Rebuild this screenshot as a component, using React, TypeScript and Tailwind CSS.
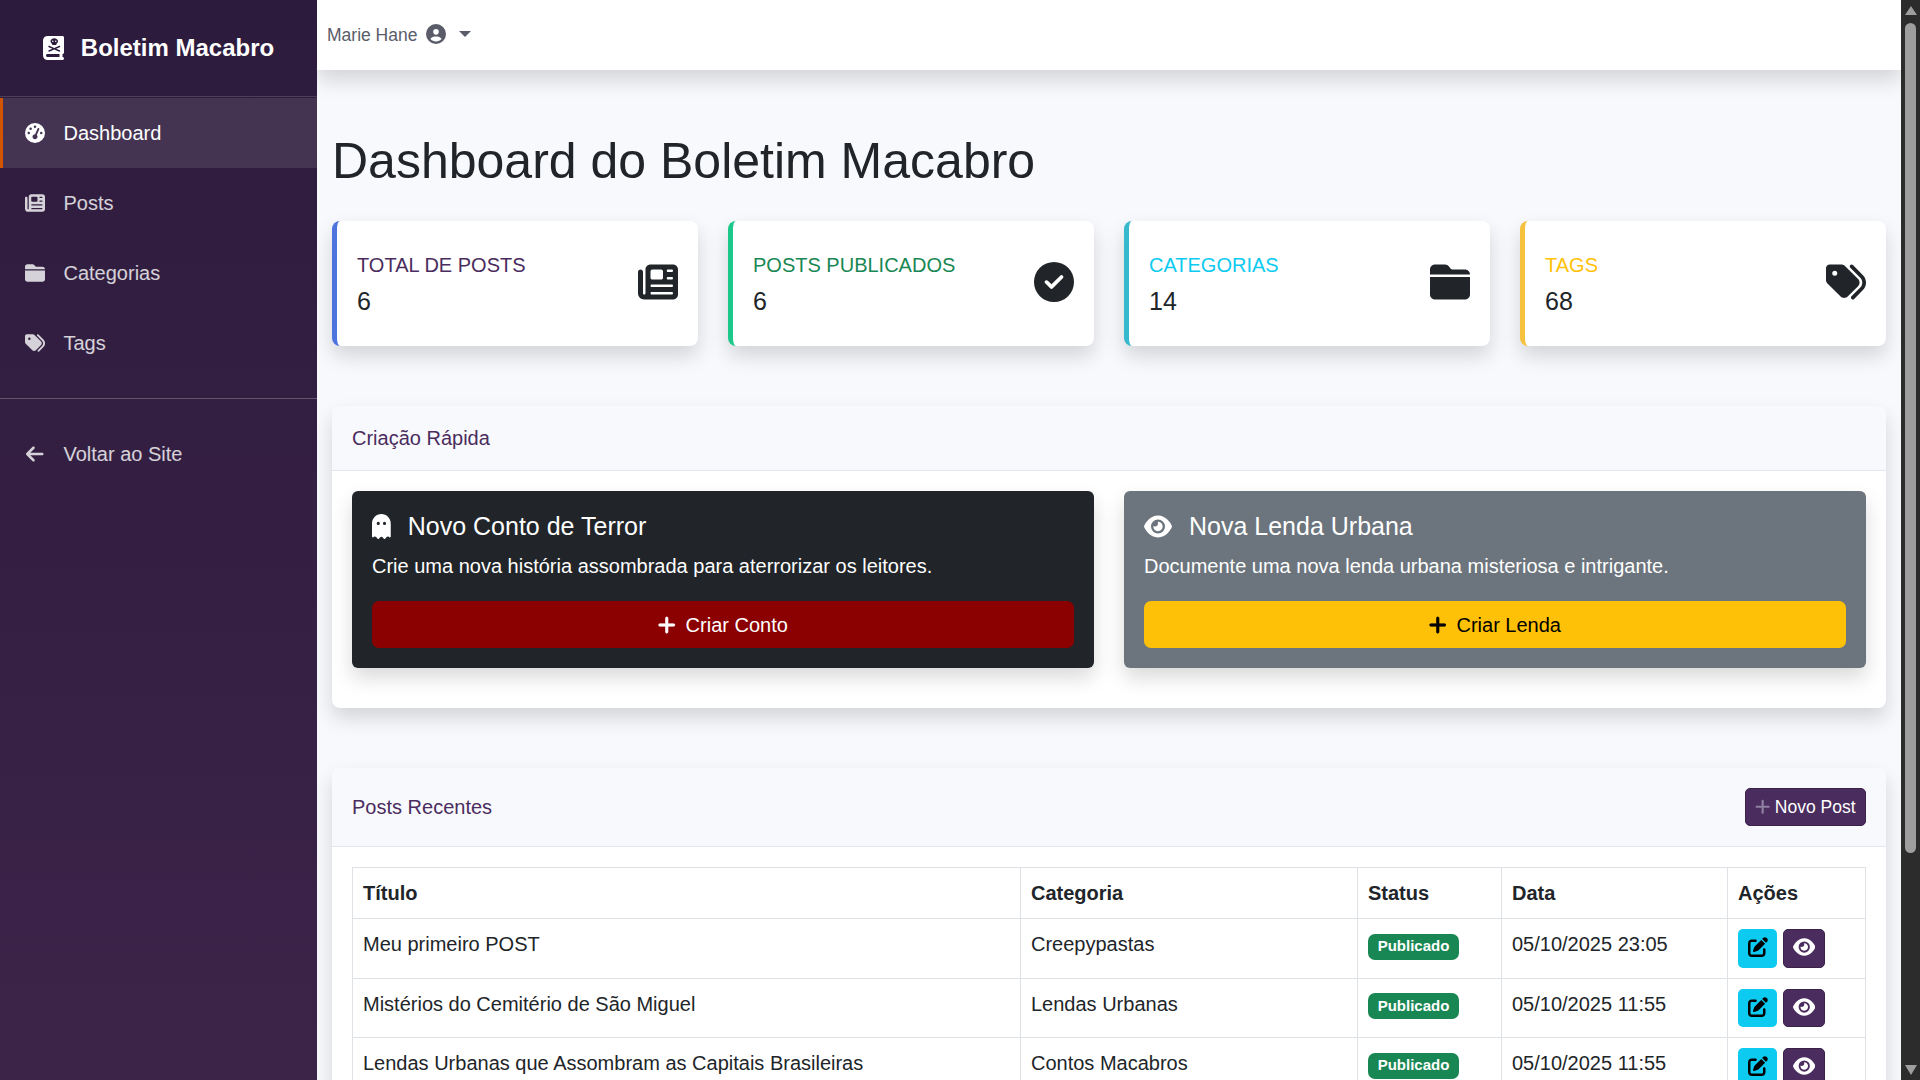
import {
  FaArrowLeft,
  FaBookSkull,
  FaCircleCheck,
  FaCircleUser,
  FaEye,
  FaFolderClosed,
  FaGaugeHigh,
  FaGhost,
  FaNewspaper,
  FaPenToSquare,
  FaPlus,
  FaTags,
} from 'react-icons/fa6';
import type { IconType } from 'react-icons';

const navItems: { label: string; icon: IconType; active?: boolean }[] = [
  { label: 'Dashboard', icon: FaGaugeHigh, active: true },
  { label: 'Posts', icon: FaNewspaper },
  { label: 'Categorias', icon: FaFolderClosed },
  { label: 'Tags', icon: FaTags },
];

const stats = [
  { label: 'Total de Posts', value: '6', icon: FaNewspaper, border: 'border-l-[#4e73df]', text: 'text-[#4a2c5e]' },
  { label: 'Posts Publicados', value: '6', icon: FaCircleCheck, border: 'border-l-[#1cc88a]', text: 'text-[#198754]' },
  { label: 'Categorias', value: '14', icon: FaFolderClosed, border: 'border-l-[#36b9cc]', text: 'text-[#0dcaf0]' },
  { label: 'Tags', value: '68', icon: FaTags, border: 'border-l-[#f6c23e]', text: 'text-[#ffc107]' },
];

const posts = [
  { title: 'Meu primeiro POST', category: 'Creepypastas', date: '05/10/2025 23:05' },
  { title: 'Mistérios do Cemitério de São Miguel', category: 'Lendas Urbanas', date: '05/10/2025 11:55' },
  { title: 'Lendas Urbanas que Assombram as Capitais Brasileiras', category: 'Contos Macabros', date: '05/10/2025 11:55' },
];

function Sidebar() {
  return (
    <aside className="w-[317px] h-full shrink-0 bg-gradient-to-b from-[#2d1b3d] to-[#3c2449]">
      <div className="h-[97px] flex items-center justify-center gap-[17px] border-b border-white/15">
        <FaBookSkull className="w-[21px] h-[24px] text-white" />
        <span className="text-[24px] font-bold text-white">Boletim Macabro</span>
      </div>
      <nav className="pt-px">
        {navItems.map(item => (
          <a
            key={item.label}
            className={`h-[70px] flex items-center gap-[16px] pl-[19.5px] border-l-[3px] text-[20px] ${
              item.active ? 'border-l-[#d35400] bg-white/10 text-white' : 'border-l-transparent text-white/80'
            }`}
          >
            <span className="w-[25px] flex justify-center">
              <item.icon className="w-[20px] h-[20px]" />
            </span>
            {item.label}
          </a>
        ))}
      </nav>
      <hr className="mt-[20px] border-white/25" />
      <a className="h-[70px] mt-[20px] flex items-center gap-[16px] pl-[22.5px] text-[20px] text-white/80">
        <span className="w-[25px] flex justify-center">
          <FaArrowLeft className="w-[17.5px] h-[20px]" />
        </span>
        Voltar ao Site
      </a>
    </aside>
  );
}

function StatCard({ stat }: { stat: (typeof stats)[number] }) {
  return (
    <div className={`h-[125px] flex items-center justify-between px-[20px] bg-white rounded-[8px] border-l-[5px] shadow-[0_10px_20px_rgba(0,0,0,0.15)] ${stat.border}`}>
      <div className="pt-[1.5px]">
        <div className={`text-[20px] leading-[24px] uppercase ${stat.text}`}>{stat.label}</div>
        <div className="mt-[9.5px] text-[25px] leading-[30px] text-[#212529]">{stat.value}</div>
      </div>
      <stat.icon className="w-[40px] h-[40px] -mt-[3px] text-[#212529]" />
    </div>
  );
}

function QuickCard({ icon: Icon, iconSize, title, text, action, tone, button }: {
  icon: IconType;
  iconSize: string;
  title: string;
  text: string;
  action: string;
  tone: string;
  button: string;
}) {
  return (
    <div className={`p-[20px] rounded-[6px] text-white shadow-[0_10px_20px_rgba(0,0,0,0.15)] ${tone}`}>
      <h5 className="flex items-center gap-[17px] text-[25px] leading-[30px]">
        <Icon className={`shrink-0 ${iconSize}`} />
        {title}
      </h5>
      <p className="mt-[10px] text-[20px] leading-[30px]">{text}</p>
      <button className={`w-full h-[47px] mt-[20px] flex items-center justify-center gap-[10px] rounded-[7px] text-[20px] ${button}`}>
        <FaPlus className="w-[17.5px] h-[20px] stroke-[16]" />
        {action}
      </button>
    </div>
  );
}

function Scrollbar() {
  return (
    <div className="w-[19px] h-full shrink-0 flex flex-col items-center bg-[#2c2c2c]">
      <div className="h-[23px] pt-[6px]">
        <div className="w-0 h-0 border-x-[6.5px] border-x-transparent border-b-[9px] border-b-[#9e9e9e]" />
      </div>
      <div className="w-[11px] h-[830px] rounded-[5.5px] bg-[#9e9e9e]" />
      <div className="flex-1" />
      <div className="h-[15px]">
        <div className="w-0 h-0 border-x-[6.5px] border-x-transparent border-t-[10px] border-t-[#9e9e9e]" />
      </div>
    </div>
  );
}

export default function App() {
  return (
    <div className="h-screen flex overflow-hidden bg-[#f8f9fc] font-['Liberation_Sans',Arial,sans-serif]">
      <Sidebar />

      <main className="flex-1 min-w-0 h-full overflow-hidden">
        {/* Top bar */}
        <header className="h-[70px] flex items-center pl-[10px] bg-white text-[17.5px] text-[#5a5c69] shadow-[0_10px_20px_rgba(0,0,0,0.15)]">
          Marie Hane
          <FaCircleUser className="w-[20px] h-[20px] ml-[9px] -mt-[2px]" />
          <span className="ml-[13px] -mt-[2px] w-0 h-0 border-x-[6px] border-x-transparent border-t-[6px] border-t-[#5a5c69]" />
        </header>

        <div className="px-[15px]">
          <h1 className="mt-[61px] text-[50px] leading-[60px] text-[#212529]">Dashboard do Boletim Macabro</h1>

          {/* Stat cards */}
          <div className="mt-[30px] grid grid-cols-4 gap-[30px]">
            {stats.map(stat => (
              <StatCard key={stat.label} stat={stat} />
            ))}
          </div>

          {/* Quick create */}
          <section className="mt-[60px] bg-white rounded-[8px] overflow-hidden shadow-[0_10px_20px_rgba(0,0,0,0.15)]">
            <div className="h-[65px] flex items-center px-[20px] bg-[#f8f9fc] border-b border-[#e3e6f0] text-[20px] text-[#4a2c5e]">
              Criação Rápida
            </div>
            <div className="p-[20px] pb-[40px] grid grid-cols-2 gap-[30px]">
              <QuickCard
                icon={FaGhost}
                iconSize="w-[18.75px] h-[25px]"
                title="Novo Conto de Terror"
                text="Crie uma nova história assombrada para aterrorizar os leitores."
                action="Criar Conto"
                tone="bg-[#212529]"
                button="bg-[#8b0000] text-white"
              />
              <QuickCard
                icon={FaEye}
                iconSize="w-[28px] h-[25px]"
                title="Nova Lenda Urbana"
                text="Documente uma nova lenda urbana misteriosa e intrigante."
                action="Criar Lenda"
                tone="bg-[#6c757d]"
                button="bg-[#ffc107] text-black"
              />
            </div>
          </section>

          {/* Recent posts */}
          <section className="mt-[60px] bg-white rounded-[8px] shadow-[0_10px_20px_rgba(0,0,0,0.15)]">
            <div className="h-[79px] flex items-center justify-between px-[20px] bg-[#f8f9fc] border-b border-[#e3e6f0] rounded-t-[8px]">
              <span className="text-[20px] text-[#4a2c5e]">Posts Recentes</span>
              <button className="w-[121px] h-[38px] flex items-center justify-center gap-[4px] rounded-[5px] border border-[#3a2249] bg-[#4a2c5e] text-[17.5px] text-white">
                <FaPlus className="w-[15.3px] h-[17.5px] text-[#8f7fa0]" />
                Novo Post
              </button>
            </div>
            <div className="p-[20px]">
              <table className="w-full table-fixed border-collapse text-[20px] text-[#212529]">
                <colgroup>
                  <col className="w-[668px]" />
                  <col className="w-[337px]" />
                  <col className="w-[144px]" />
                  <col className="w-[226px]" />
                  <col />
                </colgroup>
                <thead>
                  <tr className="h-[51px] text-left">
                    {['Título', 'Categoria', 'Status', 'Data', 'Ações'].map(h => (
                      <th key={h} className="px-[10px] border border-[#dee2e6] font-bold">{h}</th>
                    ))}
                  </tr>
                </thead>
                <tbody>
                  {posts.map(post => (
                    <tr key={post.title} className="align-top">
                      <td className="p-[10px] border border-[#dee2e6] leading-[30px]">{post.title}</td>
                      <td className="p-[10px] border border-[#dee2e6] leading-[30px]">{post.category}</td>
                      <td className="px-[10px] pt-[14.5px] border border-[#dee2e6]">
                        <span className="flex items-center justify-center w-[91px] h-[26px] rounded-[7px] bg-[#198754] text-[15px] font-bold text-white">Publicado</span>
                      </td>
                      <td className="p-[10px] border border-[#dee2e6] leading-[30px]">{post.date}</td>
                      <td className="p-[10px] border border-[#dee2e6]">
                        <div className="flex gap-[6px]">
                          <button className="w-[39px] h-[38.5px] flex items-center justify-center rounded-[5px] bg-[#0dcaf0] text-black">
                            <FaPenToSquare className="w-[20px] h-[20px] -mt-[2px]" />
                          </button>
                          <button className="w-[42px] h-[38.5px] flex items-center justify-center rounded-[5px] border border-[#3a2249] bg-[#4a2c5e] text-white">
                            <FaEye className="w-[22.5px] h-[20px] -mt-[2px]" />
                          </button>
                        </div>
                      </td>
                    </tr>
                  ))}
                </tbody>
              </table>
            </div>
          </section>
        </div>
      </main>

      <Scrollbar />
    </div>
  );
}
